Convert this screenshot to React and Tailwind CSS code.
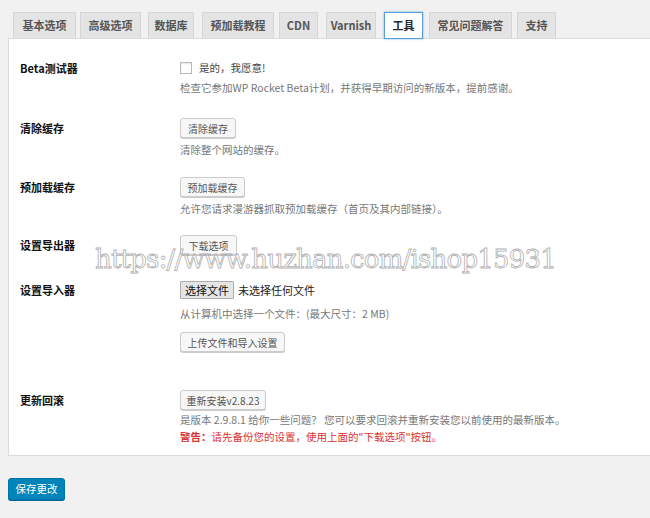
import React from "react";

const tabs = [
  { t: "基本选项", cls: "ml-[13px] w-[63px]" },
  { t: "高级选项", cls: "ml-[4px] w-[61px]" },
  { t: "数据库", cls: "ml-[7px] w-[46px]" },
  { t: "预加载教程", cls: "ml-[8px] w-[72px]" },
  { t: "CDN", cls: "ml-[5px] w-[39px]" },
  { t: "Varnish", cls: "ml-[8px] w-[50px]" },
  { t: "工具", cls: "ml-[8px] w-[39px]", active: true },
  { t: "常见问题解答", cls: "ml-[6px] w-[83px]" },
  { t: "支持", cls: "ml-[5px] w-[39px]" },
];

const font = "font-['Noto_Sans_CJK_SC','Noto_Sans',sans-serif]";

function Btn({ children, w }) {
  return (
    <div
      className={`h-[20px] ${w} flex items-center justify-center rounded-[3px] border border-[#cccccc] bg-[#f7f7f7] shadow-[0_1px_0_#cccccc] text-[10px] text-[#555]`}
    >
      {children}
    </div>
  );
}

function Label({ children }) {
  return (
    <div className="w-[160px] h-[20px] flex items-center font-bold text-[11px] text-[#111] shrink-0">
      {children}
    </div>
  );
}

export default function App() {
  return (
    <div className={`relative w-[650px] h-[518px] bg-[#f1f1f1] overflow-hidden ${font}`}>
      {/* tabs */}
      <div className="flex pt-[12px] h-[38px] items-end">
        {tabs.map((tb, i) => (
          <div
            key={i}
            className={
              tb.active
                ? `${tb.cls} h-[27px] flex items-center justify-center border border-[#5b9dd9] bg-white text-[11px] font-bold text-[#23282d] shadow-[0_0_2px_rgba(30,140,190,0.6)] relative z-10 -mb-[1px]`
                : `${tb.cls} h-[26px] flex items-center justify-center border border-b-0 border-[#d6d6d6] bg-[#e4e4e4] text-[11px] font-bold text-[#555]`
            }
          >
            {tb.t}
          </div>
        ))}
      </div>

      {/* panel */}
      <div className="ml-[8px] h-[418px] bg-white border border-r-0 border-[#dcdcdc] pl-[11px] pt-[19px]">
        {/* Beta */}
        <div className="flex">
          <Label>Beta测试器</Label>
          <div className="flex flex-col">
            <div className="h-[20px] flex items-center">
              <div className="w-[12px] h-[12px] border border-[#b4b9be] bg-white shadow-[inset_0_1px_2px_rgba(0,0,0,0.1)]" />
              <span className="ml-[7px] text-[10.5px] text-[#444]">是的，我愿意!</span>
            </div>
            <div className="h-[20px] flex items-center text-[10.5px] text-[#777]">
              检查它参加WP Rocket Beta计划，并获得早期访问的新版本，提前感谢。
            </div>
          </div>
        </div>

        {/* clear */}
        <div className="flex mt-[20px]">
          <Label>清除缓存</Label>
          <div className="flex flex-col">
            <Btn w="w-[56px]">清除缓存</Btn>
            <div className="h-[21px] flex items-center mt-[1px] text-[10.5px] text-[#777]">清除整个网站的缓存。</div>
          </div>
        </div>

        {/* preload */}
        <div className="flex mt-[17px]">
          <Label>预加载缓存</Label>
          <div className="flex flex-col">
            <Btn w="w-[65px]">预加载缓存</Btn>
            <div className="h-[21px] flex items-center mt-[1px] text-[10.5px] text-[#777]">
              允许您请求漫游器抓取预加载缓存（首页及其内部链接）。
            </div>
          </div>
        </div>

        {/* export */}
        <div className="flex mt-[16px]">
          <Label>设置导出器</Label>
          <Btn w="w-[57px]">下载选项</Btn>
        </div>

        {/* import */}
        <div className="flex mt-[25px]">
          <Label>设置导入器</Label>
          <div className="flex flex-col">
            <div className="h-[20px] flex items-center">
              <div className="h-[18px] px-[4px] flex items-center border border-[#adadad] bg-[#e5e5e5] text-[11px] text-[#111] rounded-[1px]">
                选择文件
              </div>
              <span className="ml-[4px] text-[11px] text-[#222]">未选择任何文件</span>
            </div>
            <div className="h-[20px] mt-[4px] flex items-center text-[10.5px] text-[#777]">
              从计算机中选择一个文件：(最大尺寸：2 MB)
            </div>
            <div className="mt-[8px]">
              <Btn w="w-[105px]">上传文件和导入设置</Btn>
            </div>
          </div>
        </div>

        {/* rollback */}
        <div className="flex mt-[38px]">
          <Label>更新回滚</Label>
          <div className="flex flex-col">
            <Btn w="w-[86px]">重新安装v2.8.23</Btn>
            <div className="h-[18px] mt-[1px] flex items-center text-[10.5px] text-[#777]">
              是版本 2.9.8.1 给你一些问题？ 您可以要求回滚并重新安装您以前使用的最新版本。
            </div>
            <div className="h-[16px] flex items-center text-[10.5px] text-[#dc3232]">
              <span className="font-bold">警告：</span>请先备份您的设置，使用上面的"下载选项"按钮。
            </div>
          </div>
        </div>
      </div>

      {/* save */}
      <div className="ml-[8px] mt-[22px] w-[57px] h-[22px] flex items-center justify-center rounded-[3px] bg-[#0085ba] border border-[#0073aa] shadow-[0_1px_0_#006799] text-[10.5px] text-white">
        保存更改
      </div>

      {/* watermark */}
      <div className="pointer-events-none absolute left-[95px] top-[241px] font-['DejaVu_Serif',serif] text-[26px] leading-[36px] tracking-[-0.8px] text-transparent [-webkit-text-stroke:0.8px_#b0b0b0] whitespace-nowrap">
        https://www.huzhan.com/ishop15931
      </div>
    </div>
  );
}
